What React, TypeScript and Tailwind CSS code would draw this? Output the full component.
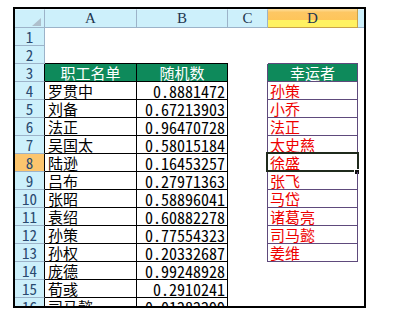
import React from "react";

const names = ["罗贯中", "刘备", "法正", "吴国太", "陆逊", "吕布", "张昭", "袁绍", "孙策", "孙权", "庞德", "荀彧", "司马懿"];
const nums = ["0.8881472", "0.67213903", "0.96470728", "0.58015184", "0.16453257", "0.27971363", "0.58896041", "0.60882278", "0.77554323", "0.20332687", "0.99248928", "0.2910241", "0.01282299"];
const lucky = ["孙策", "小乔", "法正", "太史慈", "徐盛", "张飞", "马岱", "诸葛亮", "司马懿", "姜维"];

const CJK = "font-['Noto_Sans_CJK_SC','Noto_Sans',sans-serif]";
const NUM = "font-['Noto_Sans_Mono_CJK_SC','Liberation_Mono',monospace]";

function RowHeader({ n }: { n: number }) {
  const bg = n === 8 ? "bg-[#fcc56e]" : "bg-[#cdf0fb]";
  const br = n >= 3 ? "border-r-black" : "border-r-[#9cb3c9]";
  return (
    <div className={`${bg} ${br} border-r border-b border-b-[#9cb3c9] flex items-center justify-center text-[15px] leading-[18px] text-[#2a4a70] ${NUM}`}>
      {n}
    </div>
  );
}

export default function App() {
  const rows = Array.from({ length: 16 }, (_, i) => i + 1);
  return (
    <div className="w-[420px] h-[332px] bg-white pl-[13px] pt-[7px]">
      <div className="w-[353px] h-[301px] border-2 border-black overflow-hidden bg-white">
        <div className="grid grid-cols-[30px_92px_91px_40px_90px_6px] grid-rows-[19px_repeat(16,18px)]">
          {/* header row */}
          <div className="relative bg-[#cdf0fb] border-r border-b border-[#9cb3c9] border-t border-t-[#e6f8fe]">
            <svg className="absolute left-[17px] top-[8px]" width="9" height="8" viewBox="0 0 9 8">
              <polygon points="9,0 9,8 0,8" fill="#aebfcc" />
            </svg>
          </div>
          {["A", "B", "C"].map((c) => (
            <div key={c} className="bg-[#cdf0fb] border-r border-b border-[#9cb3c9] border-t border-t-[#e6f8fe] flex items-center justify-center text-[15px] text-[#22354f] font-['Liberation_Serif',serif]">
              {c}
            </div>
          ))}
          <div className="bg-[linear-gradient(to_bottom,#fde0a0_0%,#fdc764_18%,#fec55a_60%,#fff262_63%,#fff262_100%)] border-r border-b border-[#c9a24a] flex items-center justify-center text-[15px] text-[#22354f] font-['Liberation_Serif',serif]">
            D
          </div>
          <div className="bg-[#cdf0fb] border-b border-[#9cb3c9] border-t border-t-[#e6f8fe]" />

          {rows.map((n) => {
            const idx = n - 4;
            // Column A
            let aCls = "";
            let aContent: React.ReactNode = null;
            let bCls = "";
            let bContent: React.ReactNode = null;
            if (n === 2) {
              aCls = "border-b border-black";
              bCls = "border-b border-black";
            } else if (n === 3) {
              aCls = "bg-[#0e8a5b] border-r border-b border-black justify-center text-white";
              aContent = "职工名单";
              bCls = "bg-[#0e8a5b] border-r border-b border-black justify-center text-white";
              bContent = "随机数";
            } else if (n >= 4) {
              aCls = "border-r border-b border-black pl-[3px] text-black";
              aContent = names[idx];
              bCls = "border-r border-b border-black justify-end pr-[2px] text-black";
              bContent = nums[idx];
            }
            const cCls = n >= 3 && n <= 13 ? "border-r border-[#5e4a7c]" : "";
            let dCls = "";
            let dContent: React.ReactNode = null;
            if (n === 2) dCls = "border-b border-[#5e4a7c]";
            else if (n === 3) {
              dCls = "bg-[#0e8a5b] border-r border-b border-[#5e4a7c] justify-center text-white";
              dContent = "幸运者";
            } else if (n >= 4 && n <= 13) {
              dCls = "border-r border-b border-[#5e4a7c] pl-[2px] text-[#ee0000]";
              dContent = lucky[idx];
            }
            return (
              <React.Fragment key={n}>
                <RowHeader n={n} />
                <div className={`flex items-center text-[15px] leading-[18px] whitespace-nowrap ${CJK} ${aCls}`}>{aContent}</div>
                <div className={`flex items-center text-[15px] leading-[18px] whitespace-nowrap ${n === 3 ? CJK : NUM} ${n === 3 ? "" : "text-[16px]"} ${bCls}`}>{bContent}</div>
                <div className={cCls} />
                <div className={`relative flex items-center text-[15px] leading-[18px] whitespace-nowrap ${CJK} ${dCls}`}>
                  {dContent}
                  {n === 8 && (
                    <>
                      <div className="absolute -left-[2px] -top-[2px] w-[93px] h-[20px] border-2 border-[#1f2a1c]" />
                      <div className="absolute left-[86px] top-[15px] w-[6px] h-[6px] bg-[#111] border border-white" />
                    </>
                  )}
                </div>
                <div />
              </React.Fragment>
            );
          })}
        </div>
      </div>
    </div>
  );
}
